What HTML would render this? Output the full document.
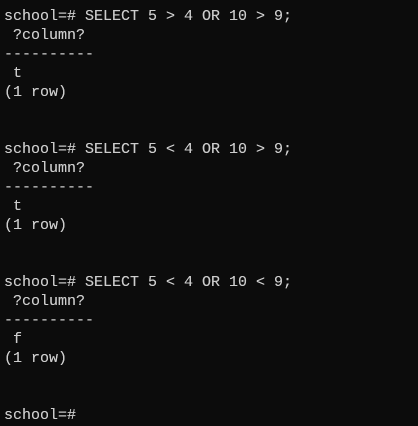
<!DOCTYPE html>
<html><head><style>
html,body{margin:0;padding:0;background:#0c0c0c;width:418px;height:426px;overflow:hidden}
pre{margin:0;padding:7px 0 0 4px;font-family:"Liberation Mono",monospace;font-size:15px;line-height:19px;color:#cccccc;text-shadow:0 0 0.3px #cccccc}
</style></head><body><pre>school=# SELECT 5 &gt; 4 OR 10 &gt; 9;
 ?column?
----------
 t
(1 row)


school=# SELECT 5 &lt; 4 OR 10 &gt; 9;
 ?column?
----------
 t
(1 row)


school=# SELECT 5 &lt; 4 OR 10 &lt; 9;
 ?column?
----------
 f
(1 row)


school=#</pre></body></html>
